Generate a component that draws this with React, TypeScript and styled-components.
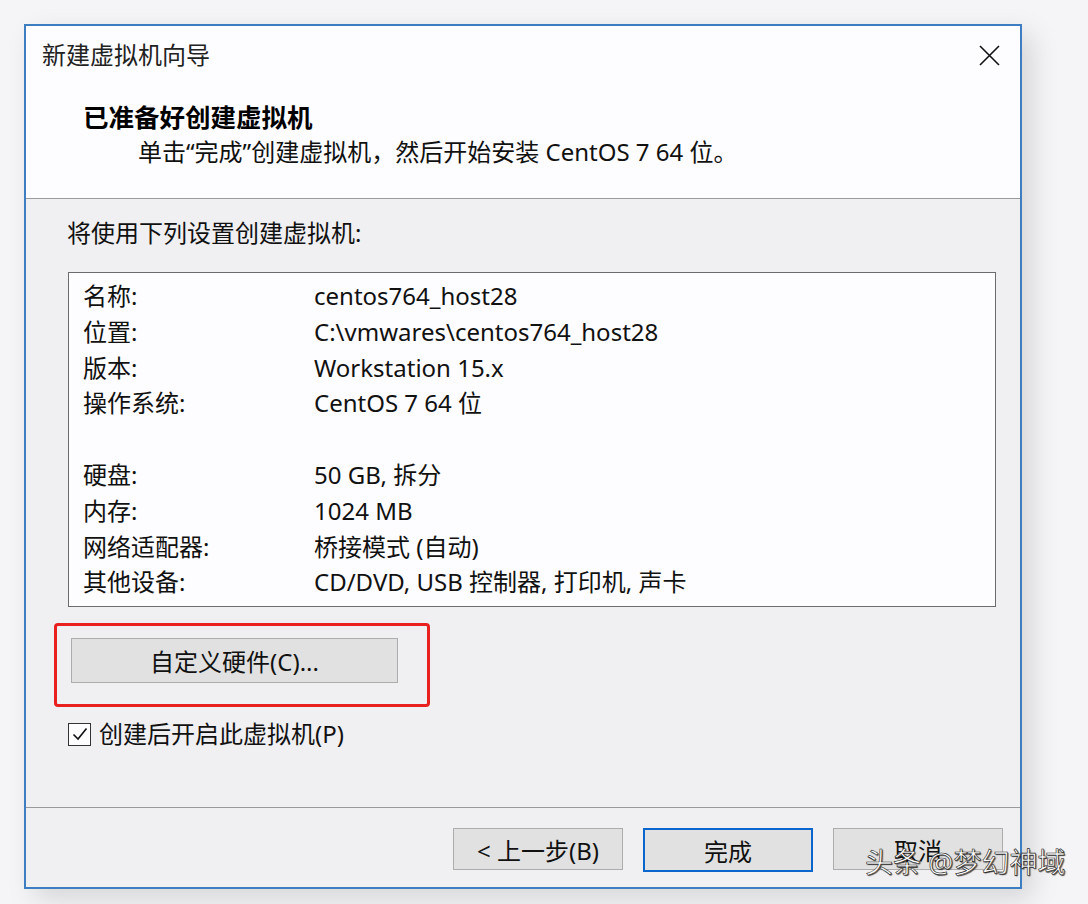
import React from "react";
import styled, { createGlobalStyle } from "styled-components";

const Global = createGlobalStyle`
  html, body { margin: 0; padding: 0; }
  body {
    background: #f5f5f7;
    font-family: "Noto Sans", "Noto Sans CJK SC", sans-serif;
    color: #111;
    width: 1088px;
    height: 904px;
    overflow: hidden;
  }
`;

const Page = styled.div`
  padding: 24px 0 0 24px;
`;

const Window = styled.div`
  position: relative;
  width: 994px;
  height: 861px;
  border: 2px solid #3d7dc2;
  display: flex;
  flex-direction: column;
  background: #f0eff1;
  box-shadow: 10px 10px 26px rgba(0, 0, 0, 0.13);
  font-size: 24px;
`;

const Header = styled.div`
  box-sizing: border-box;
  height: 173px;
  background: #fdfcfe;
  border-bottom: 1px solid #9a9a9a;
  display: flex;
  flex-direction: column;
`;

const TitleBar = styled.div`
  display: flex;
  align-items: center;
  justify-content: space-between;
  padding: 13px 20px 0 16px;
  height: 32px;
`;

const Title = styled.div`
  font-size: 24px;
  line-height: 32px;
  color: #222;
`;

const CloseBtn = styled.div`
  width: 22px;
  height: 22px;
  display: flex;
  align-items: center;
  justify-content: center;
`;

const Heading = styled.div`
  margin: 30px 0 0 57px;
  font-size: 25.5px;
  font-weight: 700;
  line-height: 32px;
  color: #000;
`;

const Subtitle = styled.div`
  margin: 3px 0 0 112px;
  font-size: 24px;
  line-height: 32px;
  color: #111;
`;

const Body = styled.div`
  flex: 1;
  display: flex;
  flex-direction: column;
  padding: 18px 24px 0 42px;
`;

const Intro = styled.div`
  line-height: 32px;
  margin-left: -1px;
`;

const Summary = styled.div`
  margin-top: 23px;
  height: 335px;
  background: #fdfcfe;
  border: 1px solid #6c6c6c;
  padding: 5px 0 0 14px;
  box-sizing: border-box;
`;

const Row = styled.div`
  display: grid;
  grid-template-columns: 231px 1fr;
  height: 35.8px;
  line-height: 35.8px;
  white-space: nowrap;
`;

const Highlight = styled.div`
  box-sizing: border-box;
  margin: 16px 0 0 -14px;
  width: 376px;
  height: 84px;
  border: 3px solid #e8211f;
  border-radius: 4px;
  padding: 12px 0 0 14px;
`;

const Button = styled.button<{ $primary?: boolean; $w: number; $h: number }>`
  width: ${(p) => p.$w}px;
  height: ${(p) => p.$h}px;
  box-sizing: border-box;
  background: #e1e1e1;
  border: ${(p) => (p.$primary ? "2px solid #0a66cc" : "1px solid #adadad")};
  font-family: inherit;
  font-size: 24px;
  color: #111;
  padding: 0;
  display: flex;
  align-items: center;
  justify-content: center;
`;

const CheckRow = styled.label`
  display: flex;
  align-items: center;
  gap: 8px;
  margin-top: 11px;
  line-height: 32px;
`;

const CheckBox = styled.span`
  width: 23px;
  height: 23px;
  box-sizing: border-box;
  border: 1.5px solid #333;
  background: #fdfcfe;
  display: flex;
  align-items: center;
  justify-content: center;
`;

const Footer = styled.div`
  box-sizing: border-box;
  height: 80px;
  border-top: 1px solid #9a9a9a;
  display: flex;
  justify-content: flex-end;
  align-items: flex-start;
  gap: 20px;
  padding: 20px 17px 0 0;
`;

const Watermark = styled.div`
  position: absolute;
  left: 839px;
  top: 818px;
  font-size: 28px;
  line-height: 36px;
  color: #fff;
  white-space: nowrap;
  -webkit-text-stroke: 0.6px #222;
  text-shadow: 1px 1px 1px rgba(0, 0, 0, 0.7);
`;

const rows: [string, string][] = [
  ["名称:", "centos764_host28"],
  ["位置:", "C:\\vmwares\\centos764_host28"],
  ["版本:", "Workstation 15.x"],
  ["操作系统:", "CentOS 7 64 位"],
  ["", ""],
  ["硬盘:", "50 GB, 拆分"],
  ["内存:", "1024 MB"],
  ["网络适配器:", "桥接模式 (自动)"],
  ["其他设备:", "CD/DVD, USB 控制器, 打印机, 声卡"],
];

export default function App() {
  return (
    <>
      <Global />
      <Page>
        <Window>
          <Header>
            <TitleBar>
              <Title>新建虚拟机向导</Title>
              <CloseBtn>
                <svg width="21" height="21" viewBox="0 0 21 21">
                  <path d="M1 1 L20 20 M20 1 L1 20" stroke="#111" strokeWidth="1.6" />
                </svg>
              </CloseBtn>
            </TitleBar>
            <Heading>已准备好创建虚拟机</Heading>
            <Subtitle>单击“完成”创建虚拟机，然后开始安装 CentOS 7 64 位。</Subtitle>
          </Header>
          <Body>
            <Intro>将使用下列设置创建虚拟机:</Intro>
            <Summary>
              {rows.map(([k, v], i) => (
                <Row key={i}>
                  <span>{k}</span>
                  <span>{v}</span>
                </Row>
              ))}
            </Summary>
            <Highlight>
              <Button $w={327} $h={45}>自定义硬件(C)...</Button>
            </Highlight>
            <CheckRow>
              <CheckBox>
                <svg width="16" height="14" viewBox="0 0 16 14">
                  <path d="M1.5 7.5 L6 12 L14.5 1.5" fill="none" stroke="#111" strokeWidth="1.6" />
                </svg>
              </CheckBox>
              创建后开启此虚拟机(P)
            </CheckRow>
          </Body>
          <Footer>
            <Button $w={170} $h={42}>&lt; 上一步(B)</Button>
            <Button $w={170} $h={44} $primary>完成</Button>
            <Button $w={170} $h={42}>取消</Button>
          </Footer>
          <Watermark>头条 @梦幻神域</Watermark>
        </Window>
      </Page>
    </>
  );
}
